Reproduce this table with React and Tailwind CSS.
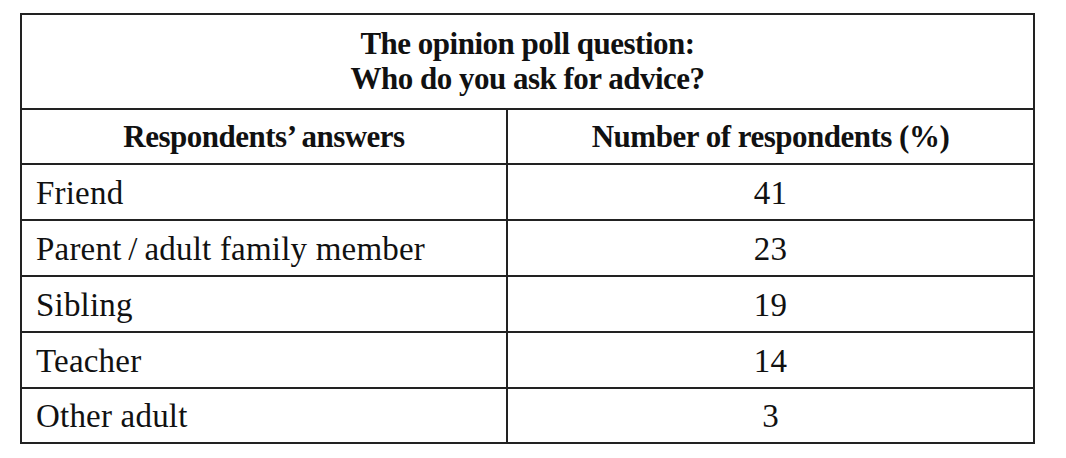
const rows = [
  { answer: "Friend", value: 41 },
  { answer: "Parent\u2009/\u2009adult family member", value: 23 },
  { answer: "Sibling", value: 19 },
  { answer: "Teacher", value: 14 },
  { answer: "Other adult", value: 3 },
];

const App = () => {
  return (
    <div className="min-h-[458px] bg-white pt-[13px] pl-[20px] font-['Liberation_Serif',serif] text-[#111]">
      <div className="w-[1015px] border-2 border-[#222]">
        <div className="h-[95px] border-b-2 border-[#222] flex flex-col items-center justify-center text-[31px] leading-[35px] font-bold tracking-[-0.5px] pb-[2px]">
          <div>The opinion poll question:</div>
          <div>Who do you ask for advice?</div>
        </div>

        <div className="grid grid-cols-[486px_1fr] h-[55px] border-b-2 border-[#222] text-[31px] font-bold tracking-[-0.5px]">
          <div className="border-r-2 border-[#222] flex items-center justify-center pt-[1px]">
            Respondents’ answers
          </div>
          <div className="flex items-center justify-center pt-[1px]">
            Number of respondents (%)
          </div>
        </div>

        {rows.map((row, index) => (
          <div
            key={row.answer}
            className={`grid grid-cols-[486px_1fr] text-[33px] tracking-[0.2px] ${
              index < rows.length - 1
                ? "h-[56px] border-b-2 border-[#222]"
                : "h-[53px]"
            }`}
          >
            <div className="border-r-2 border-[#222] flex items-center pl-[14px] pt-[3px]">
              {row.answer}
            </div>
            <div className="flex items-center justify-center pt-[3px]">
              {row.value}
            </div>
          </div>
        ))}
      </div>
    </div>
  );
};

export default App;
